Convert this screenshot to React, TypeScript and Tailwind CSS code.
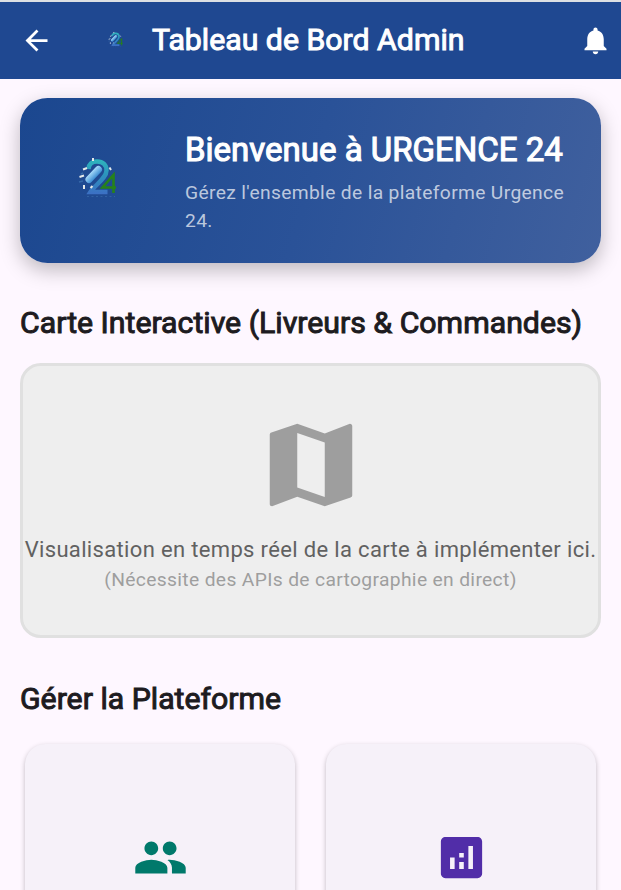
import React from 'react';

function Logo({ className, id }: { className: string; id: string }) {
  return (
    <svg className={className} viewBox="0 0 60 60" fill="none">
      <defs>
        <linearGradient id={`${id}-two`} gradientUnits="userSpaceOnUse" x1="27" y1="14" x2="27" y2="49">
          <stop stopColor="#2fb6bd" />
          <stop offset="0.45" stopColor="#2c93bd" />
          <stop offset="1" stopColor="#3c70c4" />
        </linearGradient>
        <linearGradient id={`${id}-pill`} gradientUnits="userSpaceOnUse" x1="21" y1="27" x2="27" y2="33">
          <stop stopColor="#a9dcfb" />
          <stop offset="1" stopColor="#2a80cc" />
        </linearGradient>
      </defs>
      <path d="M18.5 24C19 18.5 22.5 16.5 27 16.5C33 16.5 36.5 20 36.5 25.5C36.5 33 25 40 20.5 47H37.5" stroke={`url(#${id}-two)`} strokeWidth="4.5" />
      <path d="M43.5 48V30L32.5 42.5H46" stroke="#26821a" strokeWidth="2.6" />
      <path d="M19 34.5L28.5 24.5" stroke={`url(#${id}-pill)`} strokeWidth="7" strokeLinecap="round" />
      <path d="M23 13V16M13 24.5L17 23M9.5 32L14 30.5M14 40V44M20.5 43L22.5 41M39.5 22.5L41 25" stroke="#e4e9e9" strokeWidth="2" />
      <path d="M11 29L13 28M9 37L13 36" stroke="#3669aa" strokeWidth="1.5" />
      <path d="M17 51.5H45" stroke="#3161a2" strokeWidth="1" strokeDasharray="2 2.5" />
    </svg>
  );
}

export default function App() {
  return (
    <main className="h-[890px] w-[621px] overflow-hidden bg-[#fef7ff] font-[Roboto,sans-serif] font-normal text-[#1d1b20]">
      <header className="flex h-[79px] items-center border-t-2 border-[#dce0e3] bg-[#1f4891] text-white">
        <svg className="ml-[20px] size-[33px] shrink-0" viewBox="0 0 24 24" fill="currentColor"><path d="M20 11H7.83l5.59-5.59L12 4l-8 8 8 8 1.41-1.41L7.83 13H20z" /></svg>
        <Logo id="bar" className="mb-[4px] ml-[52px] size-[23px] shrink-0" />
        <h1 className="mb-[2px] ml-[24px] w-[312px] shrink-0 whitespace-nowrap text-[30.25px] leading-[40px] [-webkit-text-stroke:1px_currentColor]">Tableau de Bord Admin</h1>
        <svg className="ml-[115px] size-[33px] shrink-0" viewBox="0 0 24 24" fill="currentColor"><path d="M12 22c1.1 0 2-.9 2-2h-4c0 1.1.89 2 2 2zm6-6v-5c0-3.07-1.64-5.64-4.5-6.32V4c0-.83-.67-1.5-1.5-1.5s-1.5.67-1.5 1.5v.68C7.63 5.36 6 7.92 6 11v5l-2 2v1h16v-1z" /></svg>
      </header>
      <section className="mx-5 mt-[19.25px] flex h-[165px] rounded-[27.5px] bg-[linear-gradient(106deg,#1b478f,#2a5298_50%,#40609e)] pl-[50px] pt-[28.75px] text-white shadow-[0_7px_20px_rgba(0,0,0,0.26)]">
        <Logo id="hero" className="mt-[18px] size-[60px] shrink-0" />
        <div className="ml-[55px]">
          <h2 className="whitespace-nowrap text-[33px] leading-[46px] [-webkit-text-stroke:1.1px_currentColor]">Bienvenue à URGENCE 24</h2>
          <p className="mt-[6px] w-[390px] text-[19.25px] leading-[28px] tracking-[0.34px] text-white/70">Gérez l'ensemble de la plateforme Urgence<br />24.</p>
        </div>
      </section>
      <h2 className="ml-5 mt-[38.75px] whitespace-nowrap text-[30.25px] leading-[42px] [-webkit-text-stroke:1px_currentColor]">Carte Interactive (Livreurs &amp; Commandes)</h2>
      <section className="mx-5 mt-[19px] flex h-[275px] flex-col items-center rounded-[20.6px] border-[3px] border-[#e0e0e0] bg-[#eeeeee]">
        <svg className="mt-[44px] size-[110px] shrink-0 text-[#9e9e9e]" viewBox="0 0 24 24" fill="currentColor"><path d="M20.5 3l-.16.03L15 5.1 9 3 3.36 4.9c-.21.07-.36.25-.36.48V20.5c0 .28.22.5.5.5l.16-.03L9 18.9l6 2.1 5.64-1.9c.21-.07.36-.25.36-.48V3.5c0-.28-.22-.5-.5-.5zM15 19l-6-2.11V5l6 2.11V19z" /></svg>
        <p className="mt-[13px] whitespace-nowrap text-[22px] leading-[33px] tracking-[0.34px] text-[#616161]">Visualisation en temps réel de la carte à implémenter ici.</p>
        <p className="whitespace-nowrap text-[19.25px] leading-[28px] tracking-[0.34px] text-[#9e9e9e]">(Nécessite des APIs de cartographie en direct)</p>
      </section>
      <h2 className="ml-5 mt-[39.5px] whitespace-nowrap text-[30.25px] leading-[42px] [-webkit-text-stroke:1px_currentColor]">Gérer la Plateforme</h2>
      <section className="mx-5 mt-[19px] grid grid-cols-2 gap-[31.6px] px-[5.3px] py-[5.5px]">
        <div className="flex h-[269px] justify-center rounded-[20.6px] bg-[#f6f1f9] pt-[86px] shadow-[0_2px_5px_rgba(0,0,0,0.25)]">
          <svg className="size-[55px] text-[#00796b]" viewBox="0 0 24 24" fill="currentColor"><path d="M16 11c1.66 0 2.99-1.34 2.99-3S17.66 5 16 5s-3 1.34-3 3 1.34 3 3 3zm-8 0c1.66 0 2.99-1.34 2.99-3S9.66 5 8 5 5 6.34 5 8s1.34 3 3 3zm0 2c-2.33 0-7 1.17-7 3.5V19h14v-2.5c0-2.33-4.67-3.5-7-3.5zm8 0c-.29 0-.62.02-.97.05 1.16.84 1.97 1.97 1.97 3.45V19h6v-2.5c0-2.33-4.67-3.5-7-3.5z" /></svg>
        </div>
        <div className="flex h-[269px] justify-center rounded-[20.6px] bg-[#f6f1f9] pt-[86px] shadow-[0_2px_5px_rgba(0,0,0,0.25)]">
          <svg className="size-[55px] text-[#512da8]" viewBox="0 0 24 24" fill="currentColor"><path d="M19 3H5c-1.1 0-2 .9-2 2v14c0 1.1.9 2 2 2h14c1.1 0 2-.9 2-2V5c0-1.1-.9-2-2-2zM9 17H7v-5h2v5zm4 0h-2v-3h2v3zm0-5h-2v-2h2v2zm4 5h-2V7h2v10z" /></svg>
        </div>
      </section>
    </main>
  );
}
